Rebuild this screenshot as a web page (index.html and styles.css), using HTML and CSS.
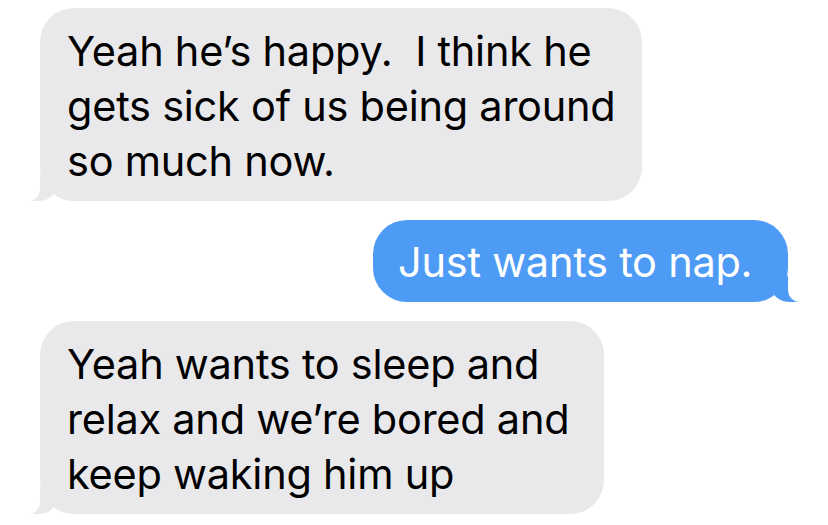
FILE: index.html
```html
<!DOCTYPE html>
<html>
<head>
<meta charset="utf-8">
<link rel="stylesheet" href="styles.css">
</head>
<body>
<div class="thread">
  <div class="bubble received b1">Yeah he’s happy.&nbsp; I think he gets sick of us being around so much now.</div>
  <div class="bubble sent b2">Just wants to nap.</div>
  <div class="bubble received b3">Yeah wants to sleep and relax and we’re bored and keep waking him up</div>
</div>
</body>
</html>
```
FILE: styles.css
```css
html, body {
  margin: 0;
  padding: 0;
  background: #ffffff;
}
body {
  width: 828px;
  height: 525px;
  overflow: hidden;
}
.thread {
  display: flex;
  flex-direction: column;
  gap: 19px;
  padding: 8px 40px 0 40px;
}
.bubble {
  position: relative;
  font-family: Inter, "Noto Sans", sans-serif;
  font-size: 41.5px;
  line-height: 55px;
  letter-spacing: -0.25px;
  padding: 16px 20px 12px 27px;
  border-radius: 34px;
  box-sizing: border-box;
}
.received {
  align-self: flex-start;
  background: #e9e9eb;
  color: #000;
}
.sent {
  align-self: flex-end;
  background: #4e9bf6;
  color: #fff;
  padding: 15px 20px 12px 25px;
}
.b1 { width: 602px; }
.b3 { width: 564px; }
.b2 { width: 415px; }

.received::before {
  content: "";
  position: absolute;
  bottom: 0;
  left: -11px;
  width: 27px;
  height: 27px;
  background: #e9e9eb;
  border-bottom-right-radius: 18px 14px;
}
.received::after {
  content: "";
  position: absolute;
  bottom: 0;
  left: -28px;
  width: 28px;
  height: 27px;
  background: #fff;
  border-bottom-right-radius: 12px;
}
.sent::before {
  content: "";
  position: absolute;
  bottom: 0;
  right: -10px;
  width: 26px;
  height: 26px;
  background: #4e9bf6;
  border-bottom-left-radius: 18px 14px;
}
.sent::after {
  content: "";
  position: absolute;
  bottom: 0;
  right: -28px;
  width: 28px;
  height: 26px;
  background: #fff;
  border-bottom-left-radius: 12px;
}
```
